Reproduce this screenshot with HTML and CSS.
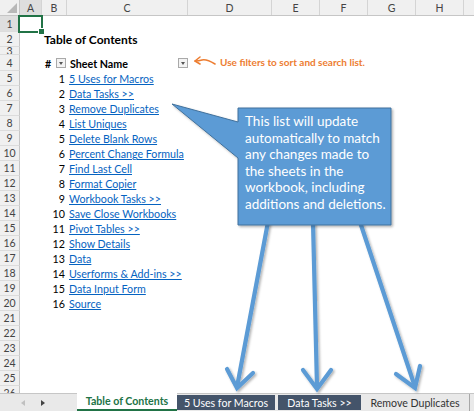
FILE: index.html
```html
<!DOCTYPE html>
<html>
<head>
<meta charset="utf-8">
<link rel="stylesheet" href="styles.css">
</head>
<body>
<div class="sheet">
  <div class="row hdr">
    <div class="corner"><span class="corner-tri"></span></div>
    <div class="ch sel">A</div><div class="ch">B</div><div class="ch">C</div><div class="ch">D</div><div class="ch">E</div><div class="ch">F</div><div class="ch">G</div><div class="ch">H</div><div class="ch last"></div>
  </div>
  <div class="row r1"><div class="rh sel">1</div><div class="c selcell"></div></div>
  <div class="row r2"><div class="rh">2</div><div class="c"></div><div class="c title">Table of Contents</div></div>
  <div class="row r3"><div class="rh">3</div></div>
  <div class="row r4"><div class="rh">4</div><div class="c"></div><div class="c hash"><b>#</b><span class="dd"></span></div><div class="c sname"><b>Sheet Name</b><span class="dd"></span></div></div>
  <div class="row"><div class="rh">5</div><div class="c"></div><div class="c num">1</div><div class="c txt"><a href="#">5 Uses for Macros</a></div></div>
  <div class="row"><div class="rh">6</div><div class="c"></div><div class="c num">2</div><div class="c txt"><a href="#">Data Tasks &gt;&gt;</a></div></div>
  <div class="row"><div class="rh">7</div><div class="c"></div><div class="c num">3</div><div class="c txt"><a href="#">Remove Duplicates</a></div></div>
  <div class="row"><div class="rh">8</div><div class="c"></div><div class="c num">4</div><div class="c txt"><a href="#">List Uniques</a></div></div>
  <div class="row"><div class="rh">9</div><div class="c"></div><div class="c num">5</div><div class="c txt"><a href="#">Delete Blank Rows</a></div></div>
  <div class="row"><div class="rh">10</div><div class="c"></div><div class="c num">6</div><div class="c txt"><a href="#">Percent Change Formula</a></div></div>
  <div class="row"><div class="rh">11</div><div class="c"></div><div class="c num">7</div><div class="c txt"><a href="#">Find Last Cell</a></div></div>
  <div class="row"><div class="rh">12</div><div class="c"></div><div class="c num">8</div><div class="c txt"><a href="#">Format Copier</a></div></div>
  <div class="row"><div class="rh">13</div><div class="c"></div><div class="c num">9</div><div class="c txt"><a href="#">Workbook Tasks &gt;&gt;</a></div></div>
  <div class="row"><div class="rh">14</div><div class="c"></div><div class="c num">10</div><div class="c txt"><a href="#">Save Close Workbooks</a></div></div>
  <div class="row"><div class="rh">15</div><div class="c"></div><div class="c num">11</div><div class="c txt"><a href="#">Pivot Tables &gt;&gt;</a></div></div>
  <div class="row"><div class="rh">16</div><div class="c"></div><div class="c num">12</div><div class="c txt"><a href="#">Show Details</a></div></div>
  <div class="row"><div class="rh">17</div><div class="c"></div><div class="c num">13</div><div class="c txt"><a href="#">Data</a></div></div>
  <div class="row"><div class="rh">18</div><div class="c"></div><div class="c num">14</div><div class="c txt"><a href="#">Userforms &amp; Add-ins &gt;&gt;</a></div></div>
  <div class="row"><div class="rh">19</div><div class="c"></div><div class="c num">15</div><div class="c txt"><a href="#">Data Input Form</a></div></div>
  <div class="row"><div class="rh">20</div><div class="c"></div><div class="c num">16</div><div class="c txt"><a href="#">Source</a></div></div>
  <div class="row"><div class="rh">21</div></div>
  <div class="row"><div class="rh">22</div></div>
  <div class="row"><div class="rh">23</div></div>
  <div class="row"><div class="rh">24</div></div>
  <div class="row"><div class="rh">25</div></div>
  <div class="row"><div class="rh">26</div></div>
</div>

<div class="tabs">
  <div class="nav"><span class="tri-l"></span><span class="tri-r"></span></div>
  <div class="tab active">Table of Contents</div>
  <div class="tab dark t2">5 Uses for Macros</div>
  <div class="tab dark t3">Data Tasks &gt;&gt;</div>
  <div class="tab plain">Remove Duplicates</div>
</div>

<svg class="overlay" width="474" height="417" viewBox="0 0 474 417">
  <defs>
    <filter id="sh" x="-20%" y="-20%" width="140%" height="140%">
      <feDropShadow dx="1.5" dy="1.5" stdDeviation="1.2" flood-color="#000" flood-opacity="0.3"/>
    </filter>
  </defs>
  <g fill="none" stroke="#ed7d31" stroke-width="1.6" stroke-linecap="round" stroke-linejoin="round">
    <path d="M215 64 C210 61 206 59 202 60 C199 61 197 61 195 61"/>
    <path d="M200 57 L195 61 L200 64"/>
  </g>
  <g fill="none" stroke="#5b9bd5" stroke-width="4.2" stroke-linecap="round" stroke-linejoin="miter" filter="url(#sh)">
    <path d="M268 222 L237 387"/>
    <path d="M227 369 L237 388 L253 373"/>
    <path d="M313 222 L317 387"/>
    <path d="M303 370 L317 389 L331 370"/>
    <path d="M360 222 L415 387"/>
    <path d="M396 374 L415 388 L420 366"/>
  </g>
  <path d="M238 108 H391 V225 H238 V158 L172 104 L238 122 Z" fill="#5b9bd5" stroke="#41719c" stroke-width="1" filter="url(#sh)"/>
</svg>

<div class="note">Use filters to sort and search list.</div>
<div class="callout">This list will update<br>automatically to match<br>any changes made to<br>the sheets in the<br>workbook, including<br>additions and deletions.</div>
</body>
</html>
```

FILE: styles.css
```css
* { box-sizing: border-box; }
html, body { margin: 0; padding: 0; }
body {
  width: 474px;
  height: 417px;
  overflow: hidden;
  background: #fff;
  position: relative;
  font-family: Lato, "Liberation Sans", sans-serif;
  color: #000;
}

.sheet { height: 393px; overflow: hidden; }

.row {
  display: grid;
  grid-template-columns: 20px 22px 25px 121px 84px 48px 48px 48px 48px 10px;
  height: 15px;
}
.r1 { height: 16px; }
.r2 { height: 15px; }
.r3 { height: 8px; }
.r4 { height: 16px; }

.hdr { height: 16px; background: #f0f0f0; border-bottom: 1px solid #c6c6c6; }
.corner {
  border-right: 1px solid #c6c6c6;
  display: flex;
  align-items: flex-end;
  justify-content: flex-end;
  padding: 0 2px 2px 0;
}
.corner-tri {
  width: 0; height: 0;
  border-left: 10px solid transparent;
  border-bottom: 10px solid #b8b8b8;
}
.ch {
  border-right: 1px solid #d4d4d4;
  font-size: 10.5px;
  color: #444;
  display: flex;
  align-items: center;
  justify-content: center;
}
.ch.sel { background: #dedede; }
.ch.last { border-right: none; }

.rh {
  background: #f0f0f0;
  border-right: 1px solid #c6c6c6;
  border-bottom: 1px solid #dcdcdc;
  font-size: 10.5px;
  color: #444;
  display: flex;
  align-items: center;
  justify-content: center;
  overflow: hidden;
  line-height: 14px;
}
.rh.sel { background: #dedede; }

.c {
  display: flex;
  align-items: center;
  white-space: nowrap;
  font-size: 10.7px;
  min-width: 0;
}
.selcell {
  position: relative;
  outline: 2px solid #217346;
  outline-offset: -1px;
  margin-left: -1px;
}
.selcell::after {
  content: "";
  position: absolute;
  right: -3px;
  bottom: -3px;
  width: 5px;
  height: 5px;
  background: #217346;
  border: 1px solid #fff;
}

.title { padding-left: 2px; font-weight: 700; font-size: 12px; overflow: visible; }
.num { justify-content: flex-end; padding-right: 2px; }
.txt { padding-left: 2px; }
.txt a {
  color: #0563c1;
  text-decoration: underline;
  text-underline-offset: 1px;
}
.hash { padding-left: 3px; justify-content: space-between; padding-right: 1px; }
.sname { padding-left: 3px; justify-content: space-between; }
.hash b, .sname b { font-weight: 700; font-size: 10.7px; }

.dd {
  width: 10px;
  height: 10px;
  border: 1px solid #a9a9a9;
  background: #f3f3f3;
  display: flex;
  align-items: center;
  justify-content: center;
}
.dd::before {
  content: "";
  width: 0; height: 0;
  border-left: 2.5px solid transparent;
  border-right: 2.5px solid transparent;
  border-top: 3px solid #555;
}

.tabs {
  display: flex;
  height: 18px;
  background: #e9e9e9;
  border-top: 1px solid #c6c6c6;
}
.nav {
  width: 77px;
  display: flex;
  align-items: center;
}
.tri-l {
  margin-left: 21px;
  width: 0; height: 0;
  border-top: 3px solid transparent;
  border-bottom: 3px solid transparent;
  border-right: 4px solid #c0c0c0;
}
.tri-r {
  margin-left: 16px;
  width: 0; height: 0;
  border-top: 3px solid transparent;
  border-bottom: 3px solid transparent;
  border-left: 4px solid #444;
}
.tab {
  display: flex;
  align-items: center;
  justify-content: center;
  white-space: nowrap;
  font-size: 10.6px;
}
.active {
  width: 100px;
  margin-top: -1px;
  height: 18px;
  background: #fff;
  color: #217346;
  font-weight: 700;
  font-size: 10.6px;
  border-bottom: 2px solid #217346;
}
.dark {
  background: #44546a;
  color: #fff;
  margin-top: 1px;
  height: 15px;
}
.t2 { width: 98px; }
.t3 { width: 83px; margin-left: 3px; }
.plain {
  width: 109px;
  color: #333;
  border-right: 1px solid #a8a8a8;
}

.overlay {
  position: absolute;
  left: 0;
  top: 0;
  pointer-events: none;
}

.note {
  position: absolute;
  left: 220px;
  top: 56px;
  font-size: 10px;
  font-weight: 700;
  color: #ed7d31;
  white-space: nowrap;
  line-height: 12px;
}

.callout {
  position: absolute;
  left: 238px;
  top: 108px;
  width: 153px;
  height: 117px;
  padding: 5px 0 0 7px;
  color: #fff;
  font-size: 13.5px;
  line-height: 16.6px;
  white-space: nowrap;
}
```
